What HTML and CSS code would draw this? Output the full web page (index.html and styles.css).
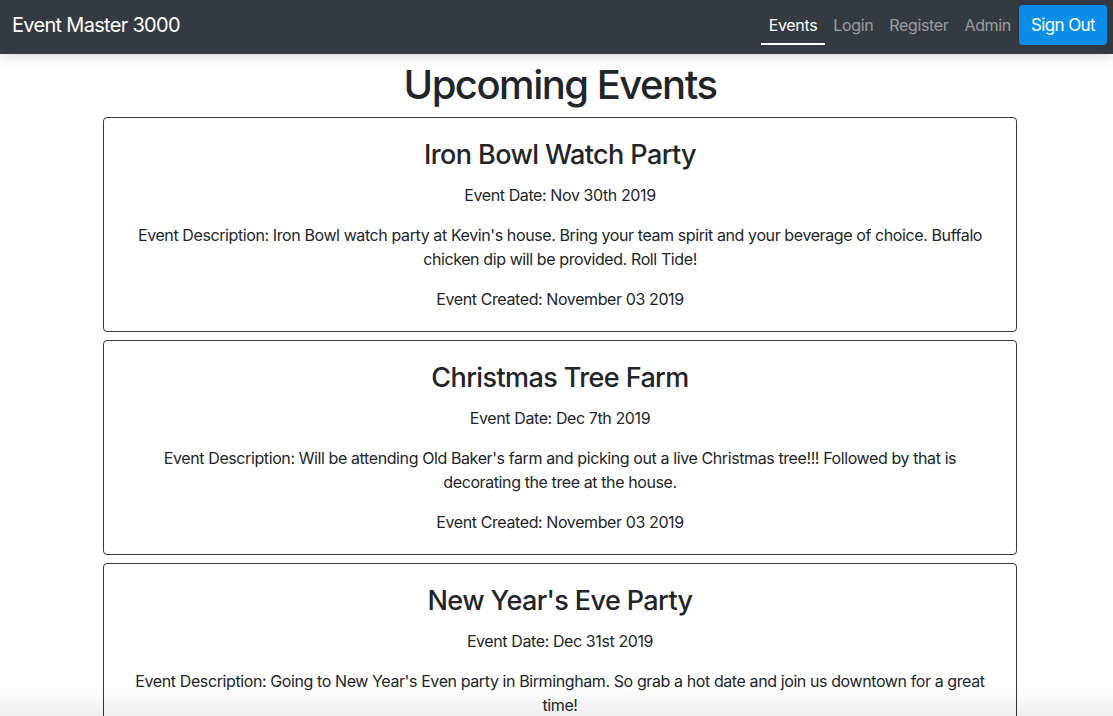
FILE: index.html
```html
<!DOCTYPE html>
<html lang="en">
<head>
<meta charset="utf-8">
<title>Event Master 3000</title>
<link rel="stylesheet" href="styles.css">
</head>
<body>
<nav class="navbar">
  <a class="brand" href="#">Event Master 3000</a>
  <div class="nav">
    <a class="nav-link active" href="#">Events</a>
    <a class="nav-link" href="#">Login</a>
    <a class="nav-link" href="#">Register</a>
    <a class="nav-link" href="#">Admin</a>
    <button class="btn">Sign Out</button>
  </div>
</nav>
<main class="container">
  <h1 class="page-title">Upcoming Events</h1>
  <div class="card">
    <h3 class="card-title">Iron Bowl Watch Party</h3>
    <p class="card-text">Event Date: Nov 30th 2019</p>
    <p class="card-text">Event Description: Iron Bowl watch party at Kevin's house. Bring your team spirit and your beverage of choice. Buffalo chicken dip will be provided. Roll Tide!</p>
    <p class="card-text">Event Created: November 03 2019</p>
  </div>
  <div class="card">
    <h3 class="card-title">Christmas Tree Farm</h3>
    <p class="card-text">Event Date: Dec 7th 2019</p>
    <p class="card-text">Event Description: Will be attending Old Baker's farm and picking out a live Christmas tree!!! Followed by that is decorating the tree at the house.</p>
    <p class="card-text">Event Created: November 03 2019</p>
  </div>
  <div class="card">
    <h3 class="card-title">New Year's Eve Party</h3>
    <p class="card-text">Event Date: Dec 31st 2019</p>
    <p class="card-text">Event Description: Going to New Year's Even party in Birmingham. So grab a hot date and join us downtown for a great time!</p>
    <p class="card-text">Event Created: November 03 2019</p>
  </div>
</main>
<div class="bottom-fade"></div>
</body>
</html>
```
FILE: styles.css
```css
* { box-sizing: border-box; }
html, body { margin: 0; padding: 0; }
body {
  font-family: Inter, "Noto Sans", "Liberation Sans", sans-serif;
  font-size: 16px;
  line-height: 1.5;
  color: #212529;
  background: #fff;
}
.navbar {
  height: 54px;
  background: #343a40;
  display: flex;
  align-items: center;
  justify-content: space-between;
  padding: 0 6px 4px 12px;
  box-shadow: 0 4px 12px rgba(0,0,0,0.12);
  position: relative;
  z-index: 2;
}
.brand {
  color: #fff;
  font-size: 20px;
  line-height: 30px;
  text-decoration: none;
  letter-spacing: -0.7px;
}
.nav {
  display: flex;
  align-items: center;
}
.nav-link {
  color: rgba(255,255,255,0.5);
  text-decoration: none;
  padding: 8px 8px 6px;
  letter-spacing: -0.35px;
  border-bottom: 2px solid transparent;
  line-height: 24px;
}
.nav-link.active {
  color: #fff;
  border-bottom-color: #fff;
}
.btn {
  background: #0c8ee8;
  color: #fff;
  border: none;
  border-radius: 4px;
  font-family: inherit;
  font-size: 17px;
  height: 40px;
  padding: 0 12px;
  letter-spacing: -0.6px;
}
.container {
  width: 914px;
  margin-left: calc(50% - 453.5px);
  padding-top: 7px;
  padding-bottom: 40px;
}
.page-title {
  text-align: center;
  font-size: 40px;
  font-weight: 500;
  line-height: 48px;
  margin: 0 0 8px;
  letter-spacing: -1.5px;
}
.card {
  border: 1px solid #343a40;
  border-radius: 4px;
  padding: 20px;
  text-align: center;
  margin-bottom: 8px;
}
.card-title {
  font-size: 27px;
  font-weight: 500;
  line-height: 33px;
  margin: 0 0 12px;
  letter-spacing: -0.6px;
}
.card-text {
  margin: 0 0 16px;
  letter-spacing: -0.4px;
}
.card-text:last-child { margin-bottom: 0; }
.bottom-fade {
  position: fixed;
  left: 0;
  right: 0;
  bottom: 0;
  height: 28px;
  background: linear-gradient(to bottom, rgba(0,0,0,0), rgba(0,0,0,0.07));
  pointer-events: none;
}
```
